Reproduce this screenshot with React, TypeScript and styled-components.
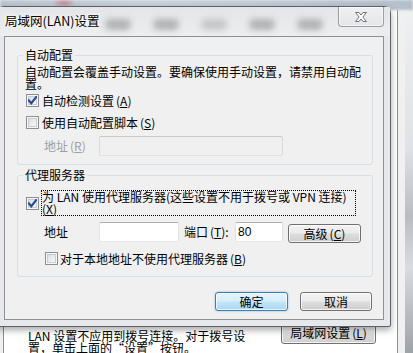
import React from "react";
import styled, { createGlobalStyle, css } from "styled-components";

const FONT = `"Noto Sans CJK SC", "Noto Sans", sans-serif`;

const GlobalStyle = createGlobalStyle`
  html, body { margin: 0; padding: 0; background: #f0f0f0; }
  * { box-sizing: border-box; }
`;

const Desktop = styled.div`
  position: relative;
  width: 413px;
  height: 353px;
  overflow: hidden;
  font-family: ${FONT};
  font-size: 12px;
  color: #000;
`;

/* ---------- parent window (behind) ---------- */
const ParentWindow = styled.div`
  display: flex;
  flex-direction: column;
  height: 100%;
  background: #f0f0f0;
`;

const TopBand = styled.div`
  flex: none;
  height: 10px;
  background:
    radial-gradient(ellipse 12px 5px at 64px 3px, rgba(200, 80, 80, 0.55), transparent),
    linear-gradient(90deg, #bcc5d2 0%, #c9d2de 35%, #c1cad7 70%, #b5bfcc 100%);
  filter: blur(1px);
`;

const ParentBody = styled.div`
  flex: 1;
  display: flex;
`;

const PanelArea = styled.div`
  flex: 1;
  display: flex;
  padding: 0 7px 0 3px;
  background: #f0f0f0;
`;

const TabPanel = styled.div`
  flex: 1;
  display: flex;
  flex-direction: column;
  justify-content: flex-end;
  background: #fff;
  border-left: 1px solid #8e8f8f;
  border-right: 1px solid #8e8f8f;
`;

const Footer = styled.div`
  display: flex;
  align-items: flex-end;
  padding: 0 21px 0 24px;
`;

const FooterText = styled.div`
  line-height: 12px;
  white-space: nowrap;
  margin-bottom: -1px;
`;

const RightFrame = styled.div`
  flex: none;
  width: 8px;
  background: linear-gradient(180deg, #eef0f2 0%, #dfe2e6 40%, #b9bdc2 60%, #d8dbdf 75%, #9ea3a8 100%);
`;

/* ---------- dialog ---------- */
const Dialog = styled.div`
  position: absolute;
  left: -3px;
  top: 6px;
  width: 394px;
  display: flex;
  flex-direction: column;
  padding: 0 6px 6px 6px;
  background: #e6e8eb;
  border: 1px solid #5e6166;
  border-radius: 7px 7px 2px 2px;
  box-shadow: 0 3px 7px rgba(0, 0, 0, 0.35);
`;

const TitleBar = styled.div`
  height: 29px;
  display: flex;
  align-items: flex-start;
  background: linear-gradient(180deg, #e3e5e8 0%, #eceef0 100%);
  margin: 0 -6px;
  padding: 0 6px;
`;

const TitleText = styled.div`
  margin: 6px 0 0 1px;
  line-height: 15px;
  font-size: 12.5px;
  white-space: nowrap;
  text-shadow: 0 0 6px #fff, 0 0 3px #fff;
`;

const BlurRow = styled.div`
  display: flex;
  gap: 22px;
  margin: 12px 0 0 6px;
`;

const Blur = styled.span<{ $light?: boolean }>`
  display: block;
  width: 26px;
  height: 11px;
  border-radius: 5px;
  background: ${(p) => (p.$light ? "#c6c6c6" : "#b2b2b2")};
  filter: blur(3px);
`;

const CloseButton = styled.div`
  margin-left: auto;
  width: 46px;
  height: 20px;
  display: flex;
  align-items: center;
  justify-content: center;
  border: 1px solid #9b9ea3;
  border-top: none;
  border-radius: 0 0 4px 4px;
  background: linear-gradient(180deg, #eef0f2 0%, #e4e6e9 100%);
  box-shadow: inset 0 0 0 1px rgba(255, 255, 255, 0.6);
`;

const Client = styled.div`
  display: flex;
  flex-direction: column;
  padding: 12px 10px 8px 12px;
  background: #f0f0f0;
  border: 1px solid #8d9094;
`;

const Group = styled.fieldset<{ $gap?: number }>`
  margin: ${(p) => p.$gap ?? 0}px 0 0 0;
  padding: 0;
  min-width: 0;
  border: 1px solid #d5dfe5;
  border-radius: 3px;
`;

const Legend = styled.legend`
  margin-left: 5px;
  padding: 0 2px;
  height: 12px;
  line-height: 12px;
  font-size: 12px;
`;

const GroupBody = styled.div<{ $pt: number; $pb: number }>`
  display: flex;
  flex-direction: column;
  align-items: flex-start;
  padding: ${(p) => p.$pt}px 0 ${(p) => p.$pb}px 7px;
`;

const Desc = styled.div`
  line-height: 12px;
  white-space: nowrap;
`;

const CheckRow = styled.label<{ $mt: number; $ml: number }>`
  display: flex;
  align-items: center;
  height: 13px;
  margin: ${(p) => p.$mt}px 0 0 ${(p) => p.$ml}px;
  line-height: 13px;
  white-space: nowrap;
`;

const Box = styled.span`
  flex: none;
  width: 13px;
  height: 13px;
  display: flex;
  align-items: center;
  justify-content: center;
  border: 1px solid #8e8f8f;
  background: linear-gradient(135deg, #d4d7da 0%, #eceef0 55%, #fbfbfb 100%);
  box-shadow: inset 0 0 0 1px #f6f6f6, inset 0 0 0 2px #c9ccd0;
`;

const CheckText = styled.span<{ $ml: number }>`
  margin-left: ${(p) => p.$ml}px;
`;

const FocusLabel = styled.span`
  margin-left: 2px;
  width: 315px;
  border: 1px dotted #000;
  line-height: 12px;
  white-space: nowrap;
`;

const ProxyRow = styled.div`
  display: flex;
  align-items: center;
  margin-left: 1px;
`;

const FieldRow = styled.div<{ $mt: number; $pl: number }>`
  display: flex;
  align-items: flex-start;
  margin-top: ${(p) => p.$mt}px;
  padding-left: ${(p) => p.$pl}px;
  white-space: nowrap;
`;

const FieldLabel = styled.span<{ $w: number; $ml?: number; $disabled?: boolean }>`
  width: ${(p) => p.$w}px;
  margin-left: ${(p) => p.$ml ?? 0}px;
  line-height: 20px;
  color: ${(p) => (p.$disabled ? "#a0a0a0" : "#000")};
`;

const TextBox = styled.input<{ $w: number }>`
  width: ${(p) => p.$w}px;
  height: 20px;
  margin: 0;
  padding: 0 2px;
  font-family: "Liberation Sans", Arial, sans-serif;
  font-size: 12px;
  color: #000;
  background: #fff;
  border: 1px solid;
  border-color: #abadb3 #e2e3ea #e3e9ef #e2e3ea;
  border-radius: 2px;
  outline: none;
  &:disabled {
    background: #f0f0f0;
    border-color: #c7c9cc #d9dadd #dfe1e4 #d9dadd;
  }
`;

const Button = styled.button<{ $w: number; $h: number; $primary?: boolean; $mt?: number; $ml?: number }>`
  width: ${(p) => p.$w}px;
  height: ${(p) => p.$h}px;
  margin: ${(p) => p.$mt ?? 0}px 0 0 ${(p) => p.$ml ?? 0}px;
  padding: 0;
  font-family: ${FONT};
  font-size: 12px;
  line-height: 12px;
  color: #000;
  border: 1px solid #707070;
  border-radius: 3px;
  background: linear-gradient(180deg, #f2f2f2 0%, #ebebeb 48%, #dddddd 52%, #cfcfcf 100%);
  box-shadow: inset 0 0 0 1px rgba(255, 255, 255, 0.75);
  white-space: nowrap;
  ${(p) =>
    p.$primary &&
    css`
      border-color: #3c7fb1;
      background: linear-gradient(180deg, #e5f4fc 0%, #d6eefb 48%, #c2e5f8 52%, #a9d8f2 100%);
      box-shadow: inset 0 0 0 1px rgba(255, 255, 255, 0.7), 0 0 2px rgba(60, 127, 177, 0.6);
    `}
`;

const ButtonRow = styled.div`
  display: flex;
  justify-content: flex-end;
  gap: 12px;
  margin-top: 15px;
  padding-right: 1px;
`;

const FooterButton = styled(Button)`
  margin-left: auto;
  margin-bottom: 9px;
`;

const Mn = styled.span`
  margin-left: 2px;
  u {
    text-decoration: underline;
    text-underline-offset: 1px;
  }
`;

const Key = ({ k }: { k: string }) => (
  <Mn>
    (<u>{k}</u>)
  </Mn>
);

const CheckMark = () => (
  <svg width="9" height="9" viewBox="0 0 9 9">
    <path d="M0.8 4.4 L3.3 7.3 L8.2 1.1" fill="none" stroke="#2a4a9a" strokeWidth="2.2" strokeLinecap="square" />
  </svg>
);

const CheckBox = ({ checked }: { checked?: boolean }) => <Box>{checked ? <CheckMark /> : null}</Box>;

const CloseIcon = () => (
  <svg width="14" height="12" viewBox="0 0 14 12">
    <path
      d="M1.5 1.5 H5 L7 4 L9 1.5 H12.5 L8.9 6 L12.5 10.5 H9 L7 8 L5 10.5 H1.5 L5.1 6 Z"
      fill="#ffffff"
      stroke="#6f737a"
      strokeWidth="1"
      strokeLinejoin="round"
    />
  </svg>
);

export default function App() {
  return (
    <Desktop>
      <GlobalStyle />
      <ParentWindow>
        <TopBand />
        <ParentBody>
          <PanelArea>
            <TabPanel>
              <Footer>
                <FooterText>
                  LAN 设置不应用到拨号连接。对于拨号设
                  <br />
                  置，单击上面的“设置”按钮。
                </FooterText>
                <FooterButton $w={95} $h={23}>
                  局域网设置<Key k="L" />
                </FooterButton>
              </Footer>
            </TabPanel>
          </PanelArea>
          <RightFrame />
        </ParentBody>
      </ParentWindow>

      <Dialog>
        <TitleBar>
          <TitleText>局域网(LAN)设置</TitleText>
          <BlurRow>
            <Blur />
            <Blur />
            <Blur $light />
            <Blur />
            <Blur />
          </BlurRow>
          <CloseButton>
            <CloseIcon />
          </CloseButton>
        </TitleBar>

        <Client>
          <Group>
            <Legend>自动配置</Legend>
            <GroupBody $pt={5} $pb={8}>
              <Desc>
                自动配置会覆盖手动设置。要确保使用手动设置，请禁用自动配
                <br />
                置。
              </Desc>
              <CheckRow $mt={4} $ml={1}>
                <CheckBox checked />
                <CheckText $ml={3}>
                  自动检测设置<Key k="A" />
                </CheckText>
              </CheckRow>
              <CheckRow $mt={9} $ml={1}>
                <CheckBox />
                <CheckText $ml={3}>
                  使用自动配置脚本<Key k="S" />
                </CheckText>
              </CheckRow>
              <FieldRow $mt={7} $pl={19}>
                <FieldLabel $w={55} $disabled>
                  地址<Key k="R" />
                </FieldLabel>
                <TextBox $w={184} disabled />
              </FieldRow>
            </GroupBody>
          </Group>

          <Group $gap={4}>
            <Legend>代理服务器</Legend>
            <GroupBody $pt={9} $pb={11}>
              <ProxyRow>
                <CheckBox checked />
                <FocusLabel>
                  为 LAN 使用代理服务器(这些设置不用于拨号或 VPN 连接)
                  <br />
                  (<u>X</u>)
                </FocusLabel>
              </ProxyRow>
              <FieldRow $mt={6} $pl={19}>
                <FieldLabel $w={55}>地址</FieldLabel>
                <TextBox $w={80} />
                <FieldLabel $w={51} $ml={5}>
                  端口<Key k="T" />:
                </FieldLabel>
                <TextBox $w={48} defaultValue="80" />
                <Button $w={73} $h={19} $mt={2} $ml={5}>
                  高级<Key k="C" />
                </Button>
              </FieldRow>
              <CheckRow $mt={9} $ml={20}>
                <CheckBox />
                <CheckText $ml={2}>
                  对于本地地址不使用代理服务器<Key k="B" />
                </CheckText>
              </CheckRow>
            </GroupBody>
          </Group>

          <ButtonRow>
            <Button $w={73} $h={19} $primary>
              确定
            </Button>
            <Button $w={72} $h={19}>
              取消
            </Button>
          </ButtonRow>
        </Client>
      </Dialog>
    </Desktop>
  );
}
